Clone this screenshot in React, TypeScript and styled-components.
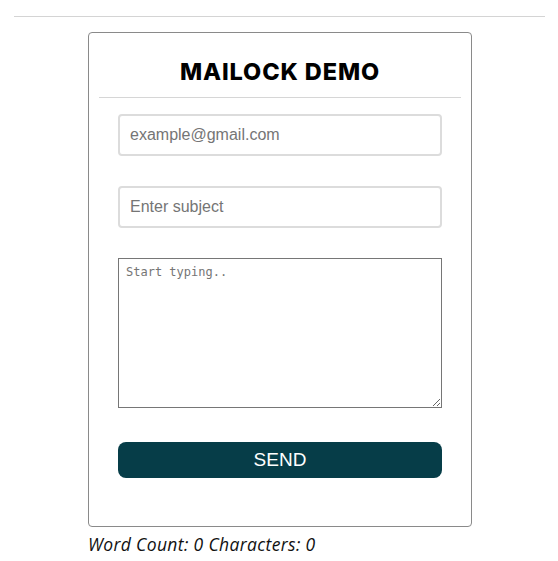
import React from "react";
import styled, { createGlobalStyle } from "styled-components";

const Global = createGlobalStyle`
  html, body { margin: 0; padding: 0; background: #fff; }
  * { box-sizing: border-box; }
`;

const Page = styled.div`
  width: 558px;
  height: 561px;
  display: flex;
  flex-direction: column;
  align-items: stretch;
  padding-top: 16px;
  overflow: hidden;
`;

const TopRule = styled.div`
  height: 1px;
  margin: 0 13px 0 14px;
  background: #d4d4d4;
`;

const Main = styled.div`
  padding: 15px 0 0 88px;
  display: flex;
  flex-direction: column;
  align-items: flex-start;
`;

const Card = styled.form`
  width: 384px;
  height: 495px;
  border: 1px solid #8a8a8a;
  border-radius: 4px;
  padding: 0 10px;
  display: flex;
  flex-direction: column;
`;

const Title = styled.h1`
  margin: 0;
  height: 65px;
  display: flex;
  align-items: center;
  justify-content: center;
  padding-top: 12px;
  font-family: "Inter", sans-serif;
  font-weight: 800;
  font-size: 23.5px;
  letter-spacing: 0.9px;
  color: #000;
  border-bottom: 1px solid #d6d6d6;
`;

const Fields = styled.div`
  padding: 16px 19px 0 19px;
  display: flex;
  flex-direction: column;
  gap: 30px;
`;

const TextInput = styled.input`
  width: 324px;
  height: 42px;
  border: 2px solid #dcdcdc;
  border-radius: 4px;
  padding: 0 10px;
  font-family: "Liberation Sans", Arial, sans-serif;
  font-size: 16px;
  color: #333;
  outline: none;
  &::placeholder { color: #757575; }
`;

const Message = styled.textarea`
  width: 324px;
  height: 150px;
  border: 1px solid #767676;
  border-radius: 0;
  padding: 6px 7px;
  font-family: "DejaVu Sans Mono", "Liberation Mono", monospace;
  font-size: 12px;
  color: #333;
  outline: none;
  resize: both;
  &::placeholder { color: #757575; }
`;

const SendButton = styled.button`
  width: 324px;
  height: 36px;
  margin-top: 4px;
  border: none;
  border-radius: 8px;
  background: #063d48;
  color: #fff;
  font-family: "Liberation Sans", Arial, sans-serif;
  font-size: 19px;
  cursor: pointer;
`;

const Stats = styled.p`
  margin: 5px 0 0;
  font-family: "Open Sans", sans-serif;
  font-style: italic;
  font-size: 17.5px;
  letter-spacing: 0.35px;
  color: #111;
`;

export default function App() {
  return (
    <>
      <Global />
      <Page>
        <TopRule />
        <Main>
          <Card onSubmit={(e) => e.preventDefault()}>
            <Title>MAILOCK DEMO</Title>
            <Fields>
              <TextInput type="email" placeholder="example@gmail.com" />
              <TextInput type="text" placeholder="Enter subject" />
              <Message placeholder="Start typing.." />
              <SendButton type="submit">SEND</SendButton>
            </Fields>
          </Card>
          <Stats>Word Count: 0 Characters: 0</Stats>
        </Main>
      </Page>
    </>
  );
}
